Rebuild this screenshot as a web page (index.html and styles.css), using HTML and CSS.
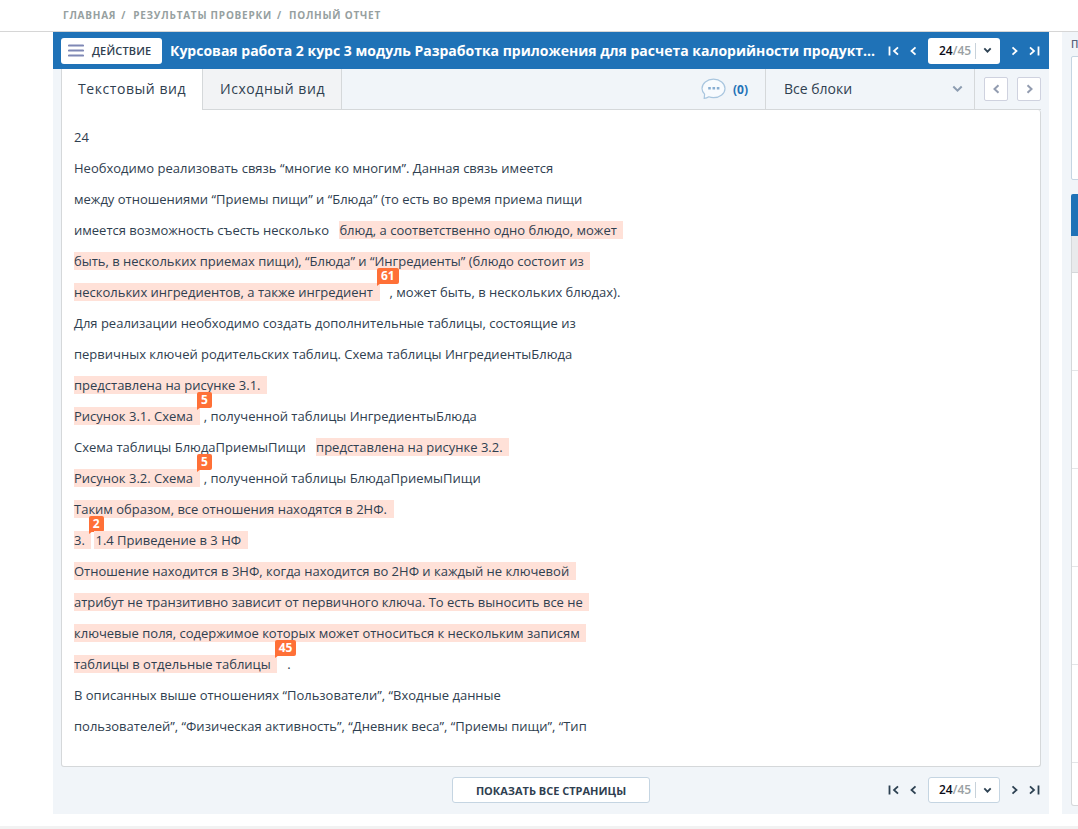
FILE: index.html
```html
<!DOCTYPE html>
<html lang="ru">
<head>
<meta charset="utf-8">
<title>Полный отчет</title>
<link rel="stylesheet" href="styles.css">
</head>
<body>
<nav class="crumbs"><span>ГЛАВНАЯ</span><i>/</i><span>РЕЗУЛЬТАТЫ ПРОВЕРКИ</span><i>/</i><span>ПОЛНЫЙ ОТЧЕТ</span></nav>
<div class="columns">
  <main class="report">
    <header class="bar">
      <button class="action"><svg width="16" height="13" viewBox="0 0 16 13"><path d="M1 1.5h14M1 6.5h14M1 11.5h14" stroke="#7f88b5" stroke-width="2.2" stroke-linecap="round"/></svg><span>ДЕЙСТВИЕ</span></button>
      <h1 class="title">Курсовая работа 2 курс 3 модуль Разработка приложения для расчета калорийности продукт...</h1>
      <div class="pager">
        <svg class="first" width="12" height="10" viewBox="0 0 12 10"><path d="M1.5 .5v9M10 1.3 6 5l4 3.7"/></svg>
        <svg class="prev" width="7" height="10" viewBox="0 0 7 10"><path d="M5.5 1.3 1.5 5l4 3.7"/></svg>
        <div class="page"><span class="num"><b>24</b>/45</span><svg class="down" width="9" height="7" viewBox="0 0 9 7"><path d="M1.3 1.3 4.5 4.7l3.2-3.4"/></svg></div>
        <svg class="next" width="7" height="10" viewBox="0 0 7 10"><path d="M1.5 1.3l4 3.7-4 3.7"/></svg>
        <svg class="last" width="12" height="10" viewBox="0 0 12 10"><path d="M2 1.3 6 5 2 8.7M10.5.5v9"/></svg>
      </div>
    </header>
    <div class="tabs">
      <div class="tab active">Текстовый вид</div>
      <div class="tab">Исходный вид</div>
      <div class="comments"><svg width="25" height="22" viewBox="0 0 25 22"><path d="M3.6 16.1C2 14.500 1 12.600 1 10.500 1 5.400 6 1.200 12.500 1.200S24 5.400 24 10.500 19 19.600 12.500 19.600c-1.700 0-3.300-.3-4.700-.8-1.200.9-2.800 1.500-4.600 1.500z" fill="#f8fbfe" stroke="#a9c6df" stroke-width="1.200"/><path d="M7.200 10.300h2.600M11.500 10.300h2.600M15.800 10.300h2.600" stroke="#88aed2" stroke-width="2.400"/></svg><span>(0)</span></div>
      <div class="select"><span>Все блоки</span><svg width="11" height="8" viewBox="0 0 11 8"><path d="M1.300 1.500 5.500 5.700l4.200-4.200"/></svg></div>
      <div class="steps">
        <button class="step"><svg width="7" height="10" viewBox="0 0 7 10"><path d="M5.500 1.300 1.500 5l4 3.700"/></svg></button>
        <button class="step"><svg width="7" height="10" viewBox="0 0 7 10"><path d="M1.500 1.300l4 3.700-4 3.700"/></svg></button>
      </div>
    </div>
    <article class="text">
      <p>24</p>
      <p>Необходимо реализовать связь “многие ко многим”. Данная связь имеется</p>
      <p>между отношениями “Приемы пищи” и “Блюда” (то есть во время приема пищи</p>
      <p>имеется возможность съесть несколько <mark class="gap">блюд, а соответственно одно блюдо, может</mark></p>
      <p><mark>быть, в нескольких приемах пищи), “Блюда” и “Ингредиенты” (блюдо состоит из</mark></p>
      <p><mark>нескольких ингредиентов, а также ингредиент<sup>61</sup></mark><span class="after wide">, может быть, в нескольких блюдах).</span></p>
      <p>Для реализации необходимо создать дополнительные таблицы, состоящие из</p>
      <p>первичных ключей родительских таблиц. Схема таблицы ИнгредиентыБлюда</p>
      <p><mark>представлена на рисунке 3.1.</mark></p>
      <p><mark>Рисунок 3.1. Схема<sup>5</sup></mark><span class="after">, полученной таблицы ИнгредиентыБлюда</span></p>
      <p>Схема таблицы БлюдаПриемыПищи <mark class="gap">представлена на рисунке 3.2.</mark></p>
      <p><mark>Рисунок 3.2. Схема<sup>5</sup></mark><span class="after">, полученной таблицы БлюдаПриемыПищи</span></p>
      <p><mark>Таким образом, все отношения находятся в 2НФ.</mark></p>
      <p><mark>3.<sup>2</sup></mark><mark class="next-mark">1.4 Приведение в 3 НФ</mark></p>
      <p><mark>Отношение находится в 3НФ, когда находится во 2НФ и каждый не ключевой</mark></p>
      <p><mark>атрибут не транзитивно зависит от первичного ключа. То есть выносить все не</mark></p>
      <p><mark>ключевые поля, содержимое которых может относиться к нескольким записям</mark></p>
      <p><mark>таблицы в отдельные таблицы<sup>45</sup></mark><span class="after wide">.</span></p>
      <p>В описанных выше отношениях “Пользователи”, “Входные данные</p>
      <p>пользователей”, “Физическая активность”, “Дневник веса”, “Приемы пищи”, “Тип</p>
    </article>
    <footer class="foot">
      <button class="all">ПОКАЗАТЬ ВСЕ СТРАНИЦЫ</button>
      <div class="pager dark">
        <svg class="first" width="12" height="10" viewBox="0 0 12 10"><path d="M1.5 .5v9M10 1.3 6 5l4 3.7"/></svg>
        <svg class="prev" width="7" height="10" viewBox="0 0 7 10"><path d="M5.5 1.3 1.5 5l4 3.7"/></svg>
        <div class="page"><span class="num"><b>24</b>/45</span><svg class="down" width="9" height="7" viewBox="0 0 9 7"><path d="M1.3 1.3 4.5 4.7l3.2-3.4"/></svg></div>
        <svg class="next" width="7" height="10" viewBox="0 0 7 10"><path d="M1.5 1.3l4 3.7-4 3.7"/></svg>
        <svg class="last" width="12" height="10" viewBox="0 0 12 10"><path d="M2 1.3 6 5 2 8.7M10.5.5v9"/></svg>
      </div>
    </footer>
  </main>
  <aside class="side">
    <div class="side-label">П</div>
    <div class="side-box"></div>
    <div class="side-head"></div>
    <div class="side-sub"></div>
    <div class="side-list"><div></div><div></div><div></div><div></div><div></div><div class="end"></div></div>
  </aside>
</div>
<div class="bottom"></div>
</body>
</html>
```

FILE: styles.css
```css
* { box-sizing: border-box; }
body { margin: 0; width: 1078px; height: 829px; overflow: hidden; background: #fff; font-family: "Open Sans", "Noto Sans", sans-serif; color: #2f4050; }
button { font-family: inherit; margin: 0; padding: 0; border: 0; background: #fff; color: inherit; }
svg { display: block; flex: none; fill: none; }
.crumbs { height: 32px; border-bottom: 1px solid #d6d6d6; padding-left: 63px; display: flex; font-size: 10px; font-weight: 700; line-height: 31px; color: #96a0a0; letter-spacing: .77px; white-space: nowrap; }
.crumbs i { font-style: normal; margin: 0 7px 0 5px; }
.columns { display: flex; height: 782px; }
.report { width: 996px; margin-left: 53px; flex: none; background: #f1f5f9; display: flex; flex-direction: column; }
.bar { height: 37px; background: #1f72b7; display: flex; align-items: center; padding-left: 8px; flex: none; }
.action { width: 101px; height: 26px; border-radius: 3px; display: flex; align-items: center; padding-left: 7px; gap: 8px; font-size: 11px; letter-spacing: .15px; font-weight: 600; flex: none; white-space: nowrap; }
.title { margin: 0 0 0 8px; width: 718px; flex: none; font-size: 14px; font-weight: 700; color: #fff; white-space: nowrap; line-height: 37px; }
.pager { display: flex; align-items: center; flex: none; stroke: #fff; stroke-width: 1.8; }
.pager.dark { stroke: #2d4152; }
.prev { margin-left: 10px; }
.page { margin: 0 11px; width: 72px; height: 26px; border-radius: 3px; background: #fff; display: flex; align-items: center; padding-left: 11px; }
.dark .page { border: 1px solid #c5d5e2; padding-left: 10px; }
.num { width: 37px; border-right: 1px solid #c8d2da; line-height: 16px; font-size: 12px; font-weight: 600; color: #999fa3; white-space: nowrap; stroke: none; }
.num b { color: #0b0b18; font-weight: 600; }
.down { margin-left: 7px; stroke: #2d4152; }
.last { margin-left: 10px; }
.tabs { height: 41px; margin: 0 0 0 8px; display: flex; flex: none; border-bottom: 1px solid #d5d8da; width: 980px; }
.tab { width: 139px; height: 40px; background: #f2f3f5; border-right: 1px solid #d5d8da; padding-left: 17px; line-height: 40px; font-size: 14px; letter-spacing: .56px; white-space: nowrap; flex: none; }
.tab.active { width: 142px; height: 41px; background: #fff; border-left: 1px solid #d5d8da; padding-left: 16px; }
.comments { width: 424px; flex: none; border-right: 1px solid #d5d8da; display: flex; align-items: center; justify-content: flex-end; padding-right: 17px; gap: 7px; font-size: 12px; font-weight: 700; color: #1f72b7; }
.select { width: 209px; flex: none; border-right: 1px solid #d5d8da; display: flex; align-items: center; justify-content: space-between; padding: 0 11px 0 18px; font-size: 14px; stroke: #8d9db1; stroke-width: 2; }
.select span { stroke: none; padding-bottom: 2px; }
.steps { display: flex; gap: 9px; padding: 8px 0 0 9px; }
.step { width: 24px; height: 24px; flex: none; border: 1px solid #cfd2df; border-radius: 2px; display: flex; align-items: center; justify-content: center; stroke: #929cb0; stroke-width: 2; }
.text { height: 657px; width: 980px; margin-left: 8px; background: #fff; border: 1px solid #d5d8da; border-top: 0; border-radius: 0 3px 3px 3px; padding: 12px 0 0 12px; flex: none; font-size: 13px; }
.text p { margin: 0; height: 31px; line-height: 31px; white-space: nowrap; }
mark { position: relative; background: #ffe1d8; color: inherit; padding-right: 6.6px; }
.gap { margin-left: 6.4px; padding-left: .6px; }
.next-mark { margin-left: 3px; padding-left: 1px; }
.after { margin-left: 4px; }
.after.wide { margin-left: 10px; }
sup { position: absolute; left: calc(100% - 2.6px); top: -15px; height: 16px; padding: 0 4px; border-radius: 2px 2px 2px 0; background: #ff7037; color: #fff; font-size: 12px; font-weight: 700; line-height: 16px; }
sup::after { content: ""; position: absolute; left: 0; top: 15px; border-top: 3px solid #ff7037; border-right: 4px solid transparent; }
.foot { display: flex; align-items: center; height: 46px; padding-left: 399px; }
.all { width: 198px; height: 26px; margin-right: 238px; border: 1px solid #c5d5e2; border-radius: 3px; font-size: 11px; font-weight: 700; white-space: nowrap; }
.side { width: 16px; margin-left: 13px; padding-left: 9px; background: #f1f5f9; overflow: hidden; display: flex; flex-direction: column; }
.side-label { height: 24px; line-height: 24px; font-size: 10px; color: #55607a; font-weight: 600; }
.side-box { height: 124px; width: 20px; border: 1px solid #c5d5e2; border-radius: 2px; background: #fff; margin-bottom: 14px; }
.side-head { height: 42px; background: #1f72b7; border-radius: 2px 0 0 0; }
.side-sub { height: 37px; background: #e9eaec; border: 1px solid #d5d8da; border-width: 0 0 1px 1px; }
.side-list { width: 20px; background: #fff; border: 1px solid #d5d8da; border-top: 0; border-radius: 0 0 3px 3px; }
.side-list div { height: 98px; border-bottom: 1px solid #e3e5e7; }
.side-list .end { height: 42px; border: 0; }
.bottom { margin-top: 12px; height: 3px; background: #f2f2f2; }
```
